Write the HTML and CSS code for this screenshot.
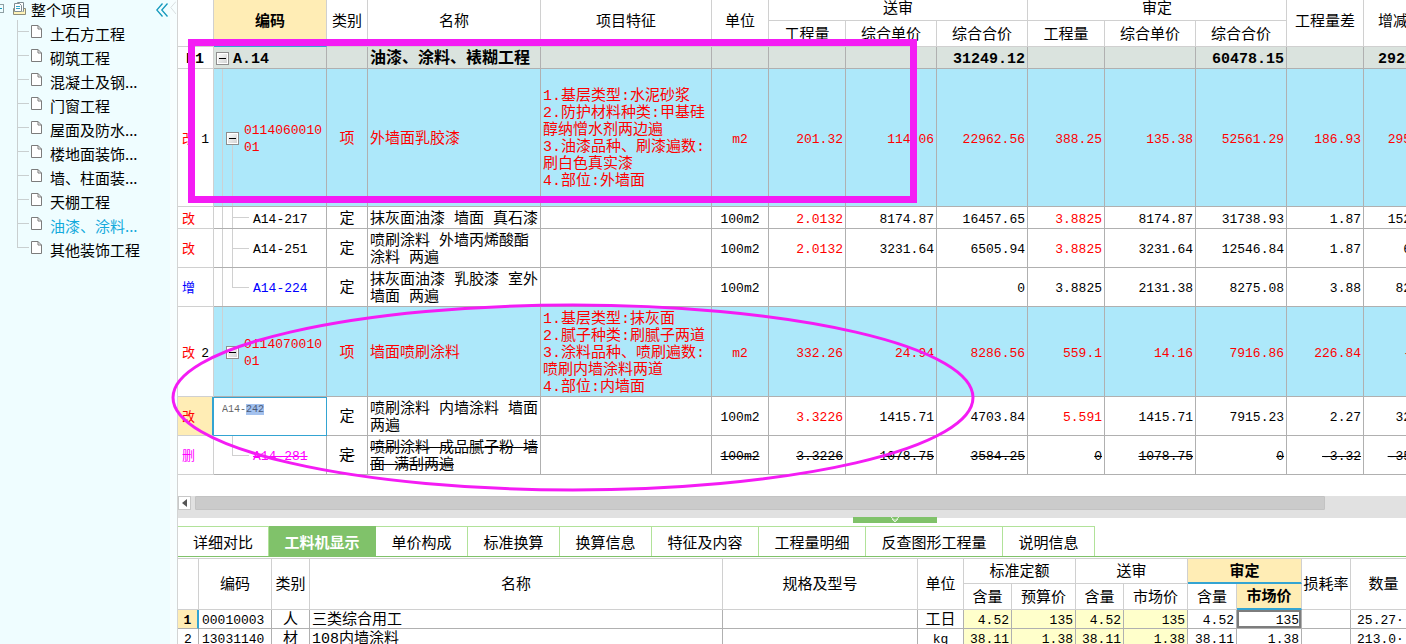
FILE: index.html
```html
<!DOCTYPE html>
<html lang="zh-CN">
<head>
<meta charset="utf-8">
<title>工程审核</title>
<link rel="stylesheet" href="styles.css">
</head>
<body>
<svg class="defs" width="0" height="0" aria-hidden="true">
  <symbol id="page" viewBox="0 0 11 13"><path d="M.5 .5H7L10.500 4V12.500H.5Z" fill="#fff" stroke="#7c7c7c"/><path d="M7 .5V4H10.500" fill="none" stroke="#7c7c7c"/></symbol>
</svg>
<div class="app">
  <nav class="sidebar">
    <div class="root">
      <span class="root-toggle"></span>
      <svg class="root-icon" width="13" height="13" viewBox="0 0 13 13"><path d="M3 6.500H.5V12.500H12.500V6.500H10" fill="#fff3b8" stroke="#8d8d7a"/><path d="M4.500 1.500V.5H10.500V9.500H9.500" fill="#fff" stroke="#7f8d92"/><path d="M1.500 1.500H6.500L8.500 3.500V9.500H1.500Z" fill="#fff" stroke="#7f8d92"/><path d="M3 4.500H7M3 6.500H7" stroke="#2fa6c8"/><path d="M1 10H12V12H1Z" fill="#fff3b8"/></svg>
      <a href="#">整个项目</a>
      <button class="collapse" aria-label="收起"><svg width="12" height="14" viewBox="0 0 12 14"><path d="M6.500 .5L.8 7L6.500 13.500M11.500 .5L5.800 7L11.500 13.500" fill="none" stroke="#1499bd" stroke-width="1.300"/></svg></button>
    </div>
    <ul class="tree">
      <li><svg><use href="#page"/></svg><a href="#">土石方工程</a></li>
      <li><svg><use href="#page"/></svg><a href="#">砌筑工程</a></li>
      <li><svg><use href="#page"/></svg><a href="#">混凝土及钢...</a></li>
      <li><svg><use href="#page"/></svg><a href="#">门窗工程</a></li>
      <li><svg><use href="#page"/></svg><a href="#">屋面及防水...</a></li>
      <li><svg><use href="#page"/></svg><a href="#">楼地面装饰...</a></li>
      <li><svg><use href="#page"/></svg><a href="#">墙、柱面装...</a></li>
      <li><svg><use href="#page"/></svg><a href="#">天棚工程</a></li>
      <li><svg><use href="#page"/></svg><a href="#" class="current">油漆、涂料...</a></li>
      <li><svg><use href="#page"/></svg><a href="#">其他装饰工程</a></li>
    </ul>
  </nav>
  <div class="splitter"><svg width="6" height="14" viewBox="0 0 6 14"><path d="M6 .5L.8 6.500L6 13" fill="none" stroke="#d9dfe0"/></svg></div>
  <main class="main">
    <section class="upper">
      <table class="grid bill">
        <colgroup><col class="w36"><col class="w113"><col class="w41"><col class="w173"><col class="w171"><col class="w57"><col class="w77"><col class="w91"><col class="w91"><col class="w77"><col class="w91"><col class="w91"><col class="w77"><col class="w89"></colgroup>
        <thead>
          <tr class="h25"><th rowspan="2"></th><th rowspan="2" class="picked">编码</th><th rowspan="2">类别</th><th rowspan="2">名称</th><th rowspan="2">项目特征</th><th rowspan="2">单位</th><th colspan="3">送审</th><th colspan="3">审定</th><th rowspan="2">工程量差</th><th rowspan="2">增减金额</th></tr>
          <tr class="h26"><th>工程量</th><th>综合单价</th><th>综合合价</th><th>工程量</th><th>综合单价</th><th>综合合价</th></tr>
        </thead>
        <tbody>
          <tr class="h22 section"><td class="gut"><div class="gut-in"><span></span><b>B1</b></div></td><td class="code"><div class="code-in lv0"><button class="fold" aria-label="折叠"></button><span>A.14</span></div></td><td></td><td class="txt">油漆、涂料、裱糊工程</td><td></td><td></td><td></td><td></td><td class="num">31249.12</td><td></td><td></td><td class="num">60478.15</td><td></td><td class="num">29229.03</td></tr>
          <tr class="h138 item"><td class="gut"><div class="gut-in"><span class="red">改</span><span>1</span></div></td><td class="code guide-item"><div class="code-in lv1"><button class="fold" aria-label="折叠"></button><span>0114060010<br>01</span></div></td><td class="mid">项</td><td class="txt">外墙面乳胶漆</td><td class="txt">1.基层类型:水泥砂浆<br>2.防护材料种类:甲基硅<br>醇纳憎水剂两边遍<br>3.油漆品种、刷漆遍数:<br>刷白色真实漆<br>4.部位:外墙面</td><td class="unit">m2</td><td class="num">201.32</td><td class="num">114.06</td><td class="num">22962.56</td><td class="num">388.25</td><td class="num">135.38</td><td class="num">52561.29</td><td class="num">186.93</td><td class="num">29598.73</td></tr>
          <tr class="h22"><td class="gut"><div class="gut-in"><span class="red">改</span></div></td><td class="code guide-leaf"><div class="code-in lv2"><span>A14-217</span></div></td><td class="mid">定</td><td class="txt">抹灰面油漆 墙面 真石漆</td><td></td><td class="unit">100m2</td><td class="num red">2.0132</td><td class="num">8174.87</td><td class="num">16457.65</td><td class="num red">3.8825</td><td class="num">8174.87</td><td class="num">31738.93</td><td class="num">1.87</td><td class="num">15281.28</td></tr>
          <tr class="h39"><td class="gut"><div class="gut-in"><span class="red">改</span></div></td><td class="code guide-leaf"><div class="code-in lv2"><span>A14-251</span></div></td><td class="mid">定</td><td class="txt">喷刷涂料 外墙丙烯酸酯<br>涂料 两遍</td><td></td><td class="unit">100m2</td><td class="num red">2.0132</td><td class="num">3231.64</td><td class="num">6505.94</td><td class="num red">3.8825</td><td class="num">3231.64</td><td class="num">12546.84</td><td class="num">1.87</td><td class="num">6040.9</td></tr>
          <tr class="h39"><td class="gut"><div class="gut-in"><span class="blue">增</span></div></td><td class="code guide-last"><div class="code-in lv2 blue"><span>A14-224</span></div></td><td class="mid">定</td><td class="txt">抹灰面油漆 乳胶漆 室外<br>墙面 两遍</td><td></td><td class="unit">100m2</td><td></td><td></td><td class="num">0</td><td class="num">3.8825</td><td class="num">2131.38</td><td class="num">8275.08</td><td class="num">3.88</td><td class="num">8275.08</td></tr>
          <tr class="h90 item"><td class="gut"><div class="gut-in"><span class="red">改</span><span>2</span></div></td><td class="code guide-enditem"><div class="code-in lv1"><button class="fold" aria-label="折叠"></button><span>0114070010<br>01</span></div></td><td class="mid">项</td><td class="txt">墙面喷刷涂料</td><td class="txt">1.基层类型:抹灰面<br>2.腻子种类:刷腻子两道<br>3.涂料品种、喷刷遍数:<br>喷刷内墙涂料两道<br>4.部位:内墙面</td><td class="unit">m2</td><td class="num">332.26</td><td class="num">24.94</td><td class="num">8286.56</td><td class="num">559.1</td><td class="num">14.16</td><td class="num">7916.86</td><td class="num">226.84</td><td class="num">-369.7</td></tr>
          <tr class="h39"><td class="gut active"><div class="gut-in"><span class="red">改</span></div></td><td class="code edit"><input class="cell-input" aria-label="编码" value="A14-242"></td><td class="mid">定</td><td class="txt">喷刷涂料 内墙涂料 墙面<br>两遍</td><td></td><td class="unit">100m2</td><td class="num red">3.3226</td><td class="num">1415.71</td><td class="num">4703.84</td><td class="num red">5.591</td><td class="num">1415.71</td><td class="num">7915.23</td><td class="num">2.27</td><td class="num">3211.39</td></tr>
          <tr class="h39 removed"><td class="gut"><div class="gut-in"><span class="pink">删</span></div></td><td class="code guide-end"><div class="code-in lv2 pink"><span>A14-281</span></div></td><td class="mid">定</td><td class="txt">喷刷涂料 成品腻子粉 墙<br>面 满刮两遍</td><td></td><td class="unit">100m2</td><td class="num">3.3226</td><td class="num">1078.75</td><td class="num">3584.25</td><td class="num">0</td><td class="num">1078.75</td><td class="num">0</td><td class="num">-3.32</td><td class="num">-3584.25</td></tr>
        </tbody>
      </table>
    </section>
    <div class="scrollbar"><button class="scroll-left" aria-label="向左滚动"><svg width="5" height="8" viewBox="0 0 5 8"><path d="M5 0V8L0 4Z" fill="#555"/></svg></button><div class="thumb"></div></div>
    <div class="tabs-zone">
      <button class="drawer" aria-label="收起面板"><svg width="10" height="6" viewBox="0 0 10 6"><path d="M1 0L5 3.500L9 0M2 2L5 5L8 2" fill="none" stroke="#e3f3dc"/></svg></button>
      <div class="tabs">
        <button class="tab s">详细对比</button><button class="tab m on">工料机显示</button><button class="tab s">单价构成</button><button class="tab s">标准换算</button><button class="tab s">换算信息</button><button class="tab m">特征及内容</button><button class="tab m">工程量明细</button><button class="tab l">反查图形工程量</button><button class="tab s">说明信息</button>
      </div>
    </div>
    <section class="lower">
      <table class="grid res">
        <colgroup><col class="w21"><col class="w73"><col class="w38"><col class="w413"><col class="w195"><col class="w46"><col class="w48"><col class="w64"><col class="w48"><col class="w64"><col class="w49"><col class="w65"><col class="w49"><col class="w66"></colgroup>
        <thead>
          <tr class="h25"><th rowspan="2"></th><th rowspan="2">编码</th><th rowspan="2">类别</th><th rowspan="2">名称</th><th rowspan="2">规格及型号</th><th rowspan="2">单位</th><th colspan="2">标准定额</th><th colspan="2">送审</th><th colspan="2" class="picked">审定</th><th rowspan="2">损耗率</th><th rowspan="2">数量</th></tr>
          <tr class="h26"><th>含量</th><th>预算价</th><th>含量</th><th>市场价</th><th>含量</th><th class="picked">市场价</th></tr>
        </thead>
        <tbody>
          <tr class="h19"><td class="rowno active">1</td><td class="rescode">00010003</td><td class="mid">人</td><td class="txt">三类综合用工</td><td></td><td class="mid">工日</td><td class="num pale">4.52</td><td class="num pale">135</td><td class="num pale">4.52</td><td class="num pale">135</td><td class="num">4.52</td><td class="num focus">135</td><td></td><td class="amount">25.27···</td></tr>
          <tr class="h19"><td class="rowno">2</td><td class="rescode">13031140</td><td class="mid">材</td><td class="txt">108内墙涂料</td><td></td><td class="unit">kg</td><td class="num pale">38.11</td><td class="num pale">1.38</td><td class="num pale">38.11</td><td class="num pale">1.38</td><td class="num">38.11</td><td class="num">1.38</td><td></td><td class="amount">213.0···</td></tr>
        </tbody>
      </table>
    </section>
  </main>
</div>
<svg class="marks" width="1000" height="500" viewBox="0 0 1000 500" aria-hidden="true">
  <rect x="191.500" y="42.500" width="722" height="157"/>
  <ellipse cx="573" cy="397.500" rx="400" ry="92.500"/>
</svg>
<script src="app.js"></script>
</body>
</html>
```

FILE: styles.css
```css
* { box-sizing: border-box; }

body {
  margin: 0;
  height: 100vh;
  overflow: hidden;
  position: relative;
  background: #fff;
  color: #000;
  font: 15px/17px "Liberation Mono", "Noto Sans CJK SC", monospace;
}

button { font: inherit; color: inherit; border: 0; padding: 0; background: none; }
a { color: inherit; text-decoration: none; }
.defs { position: absolute; }

.app { display: flex; height: 100%; }

/* project tree */
.sidebar {
  flex: 0 0 170px;
  background: #effdff;
  font-family: "Noto Sans CJK SC", sans-serif;
  line-height: 24px;
}
.root { display: flex; align-items: center; height: 20px; }
.root-toggle {
  width: 4px;
  height: 9px;
  margin: 0 9px 4px 0;
  border: 1px solid #8fa0a4;
  border-left: 0;
  background: linear-gradient(#1499bd, #1499bd) 0 3px / 2px 1px no-repeat;
}
.root-icon { margin: 0 5px 4px 0; }
.collapse { height: 14px; margin-left: auto; margin-right: 2px; display: flex; }
.tree {
  list-style: none;
  margin: 0 0 0 17px;
  padding: 2px 0 0;
  background: linear-gradient(#c9cfd0, #c9cfd0) 0 0 / 1px 228px no-repeat;
}
.tree li {
  display: flex;
  gap: 8px;
  height: 24px;
  padding-left: 14px;
  background: linear-gradient(#c9cfd0, #c9cfd0) 0 9px / 12px 1px no-repeat;
}
.tree svg { width: 11px; height: 13px; margin-top: 3px; }
.current { color: #14aadc; }

.splitter { flex: 0 0 7px; padding-top: 1px; background: #f7feff; }
.splitter svg { display: block; }

.main { flex: 1; min-width: 0; display: flex; flex-direction: column; border-left: 1px solid #d4d4d4; }

/* data grids */
.grid { table-layout: fixed; border-collapse: separate; border-spacing: 0; }
.grid th, .grid td {
  padding: 3px 0 0;
  border-right: 1px solid #b0b0b0;
  border-bottom: 1px solid #b0b0b0;
  white-space: nowrap;
  overflow: hidden;
}
.grid th { border-color: #d0d0d0; font-weight: 400; }
.grid .picked { background: #ffedb5; border-bottom: 2px solid #34a4d2; font-weight: 700; }
.bill { width: 1275px; margin-top: -4px; }
.res { width: 1239px; border-top: 1px solid #d0d0d0; }

.w21 { width: 21px; } .w36 { width: 36px; } .w38 { width: 38px; } .w41 { width: 41px; }
.w46 { width: 46px; } .w48 { width: 48px; } .w49 { width: 49px; } .w57 { width: 57px; }
.w64 { width: 64px; } .w65 { width: 65px; } .w66 { width: 66px; } .w73 { width: 73px; }
.w77 { width: 77px; } .w89 { width: 89px; } .w91 { width: 91px; } .w113 { width: 113px; }
.w171 { width: 171px; } .w173 { width: 173px; } .w195 { width: 195px; } .w413 { width: 413px; }

.h19 { height: 19px; } .h22 { height: 22px; } .h25 { height: 25px; } .h26 { height: 26px; }
.h39 { height: 39px; } .h90 { height: 90px; } .h138 { height: 138px; }

.grid .txt { padding-left: 2px; }
.mid { text-align: center; }
.unit { text-align: center; font-size: 13px; }
.num { text-align: right; font-size: 13px; }
.grid .num { padding-right: 2px; }

.red { color: #f00; }
.blue { color: #00f; }
.pink { color: #f0f; }

.section td { background: #dae3de; font-weight: 700; font-size: 16px; }
.section .num { font-size: 15px; }
.item td { background-color: #ade8fa; color: #f00; }
.removed .mid, .removed .txt, .removed .unit, .removed .num, .removed .code span { text-decoration: line-through; }

.grid .gut { background: #fff; color: #000; border-color: #d0d0d0; }
.grid .gut.active { background: #ffedb5; border-right: 2px solid #34a4d2; }
.gut-in { display: flex; justify-content: space-between; padding: 0 4px; font-size: 13px; }
.section .gut-in { font-size: 15px; padding-right: 9px; }

.grid .code { padding-top: 1px; font-size: 13px; background-repeat: no-repeat; }
.code-in { display: flex; align-items: center; }
.code-in span { padding-top: 2px; }
.section .code-in { font-size: 15px; }
.lv0 { padding-left: 2px; gap: 4px; }
.lv1 { padding-left: 12px; gap: 5px; }
.lv2 { padding-left: 39px; }
.fold {
  flex: none;
  width: 13px;
  height: 13px;
  border: 1px solid #8e8e8e;
  box-shadow: inset 0 0 0 1px #fff;
  background: linear-gradient(#000, #000) center / 7px 1px no-repeat, linear-gradient(135deg, #fff, #cfd0d0);
}

/* connector lines of the code column */
.guide-item {
  background-image: linear-gradient(#ccd1d3, #ccd1d3), linear-gradient(#ccd1d3, #ccd1d3);
  background-position: 8px 0, 18px 100%;
  background-size: 1px 100%, 1px 50%;
}
.guide-leaf {
  background-image: linear-gradient(#d0d0d0, #d0d0d0), linear-gradient(#d0d0d0, #d0d0d0), linear-gradient(#d0d0d0, #d0d0d0);
  background-position: 8px 0, 18px 0, 18px 50%;
  background-size: 1px 100%, 1px 100%, 17px 1px;
}
.guide-last {
  background-image: linear-gradient(#d0d0d0, #d0d0d0), linear-gradient(#d0d0d0, #d0d0d0), linear-gradient(#d0d0d0, #d0d0d0);
  background-position: 8px 0, 18px 0, 18px 50%;
  background-size: 1px 100%, 1px 50%, 17px 1px;
}
.guide-enditem {
  background-image: linear-gradient(#ccd1d3, #ccd1d3), linear-gradient(#ccd1d3, #ccd1d3);
  background-position: 8px 0, 18px 100%;
  background-size: 1px 50%, 1px 50%;
}
.guide-end {
  background-image: linear-gradient(#d0d0d0, #d0d0d0), linear-gradient(#d0d0d0, #d0d0d0);
  background-position: 18px 0, 18px 50%;
  background-size: 1px 50%, 17px 1px;
}

.grid .edit { border-color: #34a4d2; box-shadow: inset 0 1px #34a4d2; vertical-align: top; }
.cell-input {
  display: block;
  width: 100%;
  height: 22px;
  border: 0;
  outline: 0;
  padding: 0 8px;
  background: none;
  color: #666;
  font: 10px/14px "Liberation Mono", monospace;
  caret-color: transparent;
}
.cell-input::selection { background: #a3c1ee; color: #4a5a78; }

.upper { flex: none; overflow: hidden; padding-bottom: 21px; }

.scrollbar { flex: none; display: flex; gap: 4px; height: 22px; background: #e1e1e1; }
.scroll-left {
  display: flex;
  align-items: center;
  justify-content: center;
  width: 13px;
  height: 14px;
  background: #fff;
  border: 1px solid #c8c8c8;
}
.thumb { width: 92%; height: 14px; background: #cbcbcb; border: 1px solid #c3c3c3; border-radius: 1px; }

/* detail tabs */
.tabs-zone { flex: none; position: relative; padding-top: 8px; }
.drawer {
  position: absolute;
  top: -1px;
  left: 55%;
  width: 84px;
  height: 6px;
  display: flex;
  justify-content: center;
  background: #80c26a;
}
.tabs { display: flex; height: 31px; border-bottom: 1px solid #80c26a; }
.tab { flex: none; border-top: 1px solid #b1e299; border-right: 1px solid #b1e299; padding-top: 5px; }
.tab.s { width: 92px; }
.tab.s:first-child { width: 91px; }
.tab.m { width: 107px; }
.tab.l { width: 137px; }
.tab.on { background: #80c26a; border-color: #80c26a; color: #fff; font-weight: 700; }

.lower { flex: 1; min-height: 0; overflow: hidden; padding-top: 1px; }
.res tbody td { line-height: 15px; }
.rowno { text-align: center; font-size: 13px; }
.rowno.active { background: #ffedb5; font-weight: 700; }
.grid .rowno.active { border-right: 2px solid #34a4d2; }
.grid .rescode { padding-left: 3px; font-size: 13px; }
.grid .amount { padding-left: 6px; font-size: 13px; }
.pale { background: #ffffcb; }
.grid .focus { box-shadow: inset 0 0 0 2px #7d7d7d; }

/* review marks drawn over the sheet */
.marks { position: absolute; left: 0; top: 0; fill: none; stroke: #f41cf4; pointer-events: none; }
.marks rect { stroke-width: 7; }
.marks ellipse { stroke-width: 3; }
```

FILE: app.js
```javascript
const cell = document.querySelector('.cell-input');
cell.focus();
cell.setSelectionRange(4, 7);
```
